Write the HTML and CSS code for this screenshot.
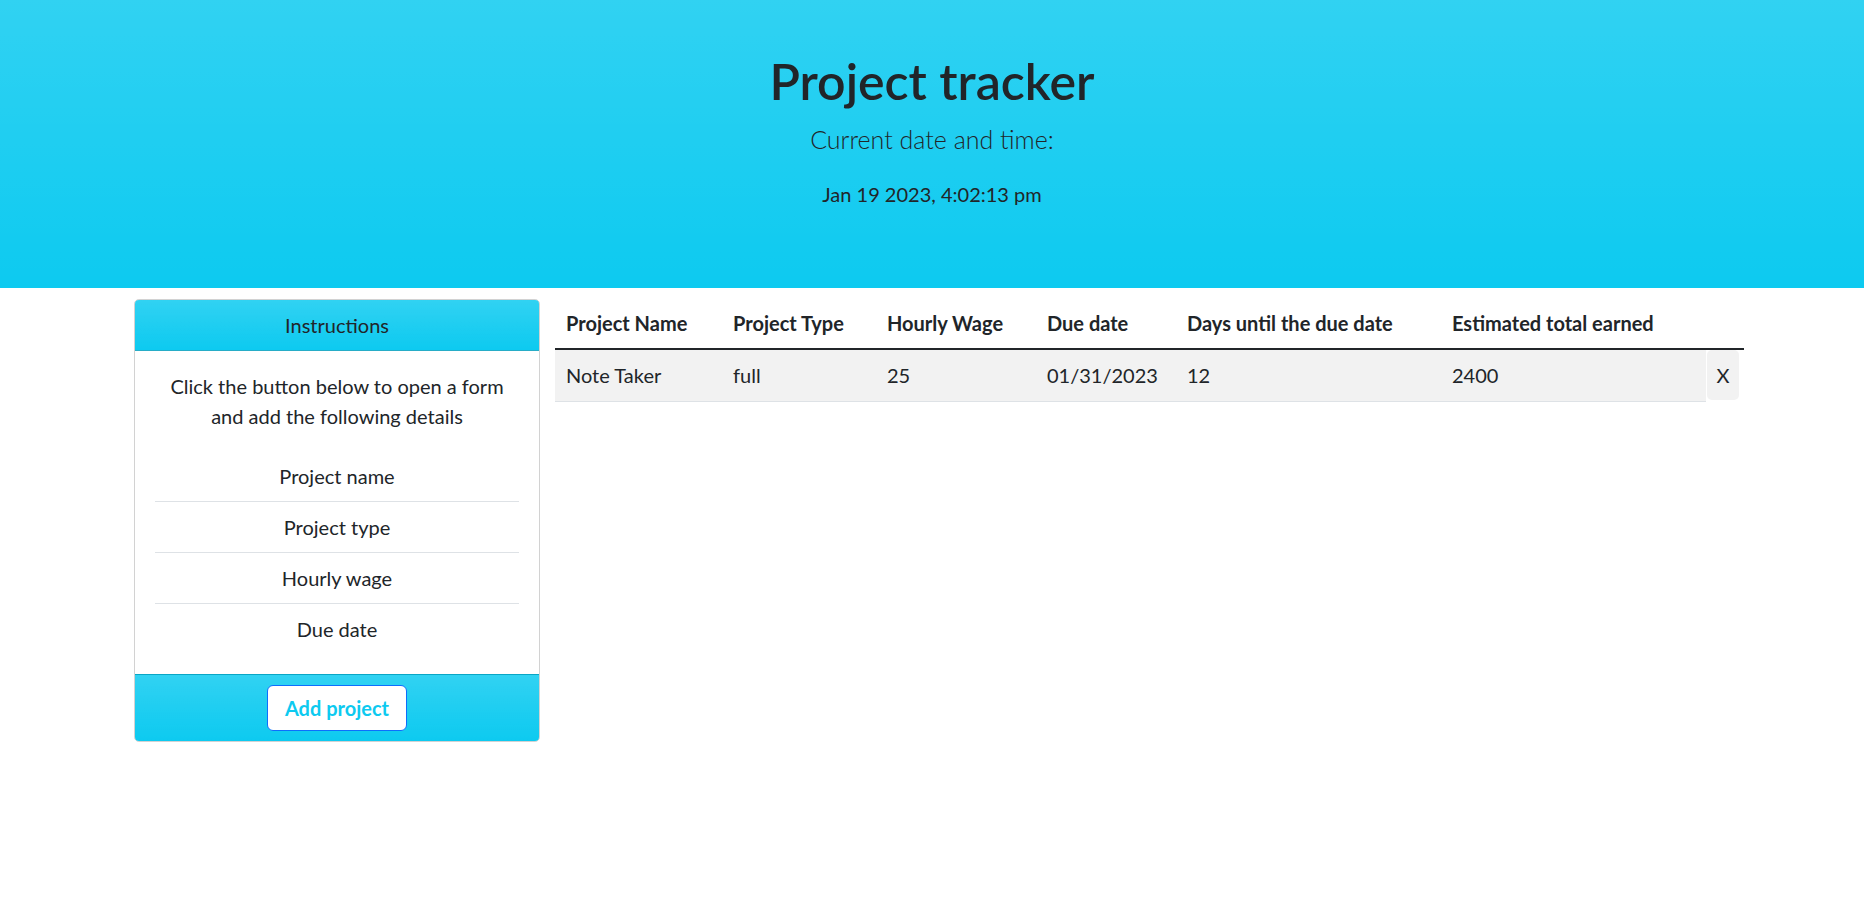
FILE: index.html
```html
<!DOCTYPE html>
<html lang="en">
<head>
<meta charset="utf-8">
<title>Project tracker</title>
<link rel="stylesheet" href="styles.css">
</head>
<body>
<header class="hero">
  <h1 class="title">Project tracker</h1>
  <p class="lead">Current date and time:</p>
  <p class="now">Jan 19 2023, 4:02:13 pm</p>
</header>
<main class="main">
  <aside class="card">
    <div class="card-header">Instructions</div>
    <div class="card-body">
      <p class="intro">Click the button below to open a form<br>and add the following details</p>
      <ul class="list">
        <li class="list-item">Project name</li>
        <li class="list-item">Project type</li>
        <li class="list-item">Hourly wage</li>
        <li class="list-item">Due date</li>
      </ul>
    </div>
    <div class="card-footer"><button class="add-btn" type="button">Add project</button></div>
  </aside>
  <section class="table-wrap">
    <table class="tbl">
      <thead>
        <tr>
          <th class="c1">Project Name</th>
          <th class="c2">Project Type</th>
          <th class="c3">Hourly Wage</th>
          <th class="c4">Due date</th>
          <th class="c5">Days until the due date</th>
          <th class="c6">Estimated total earned</th>
          <th class="c7"></th>
        </tr>
      </thead>
      <tbody>
        <tr class="striped">
          <td>Note Taker</td>
          <td>full</td>
          <td>25</td>
          <td>01/31/2023</td>
          <td>12</td>
          <td>2400</td>
          <td class="cx"><button class="del" type="button">X</button></td>
        </tr>
      </tbody>
    </table>
  </section>
</main>
</body>
</html>
```
FILE: styles.css
```css
* { box-sizing: border-box; }
html, body { margin: 0; padding: 0; }
body {
  font-family: "Segoe UI", Lato, "Open Sans", sans-serif;
  font-size: 20px;
  line-height: 1.5;
  color: #212529;
  background: #fff;
}
.hero {
  height: 288px;
  padding-top: 51px;
  text-align: center;
  background: linear-gradient(180deg, rgba(255,255,255,.15), rgba(255,255,255,0)), #0dcaf0;
}
.title {
  margin: 0 0 10px;
  font-size: 50px;
  line-height: 60px;
  font-weight: 600;
}
.lead {
  margin: 0 0 20px;
  font-size: 25px;
  line-height: 37.5px;
  font-weight: 300;
}
.now {
  margin: 0;
  font-size: 20px;
  line-height: 30px;
}
.main {
  display: flex;
  align-items: flex-start;
  gap: 15px;
  padding: 10px 0 0 134px;
}
.card {
  width: 406px;
  flex: none;
  margin-top: 1px;
  border: 1px solid rgba(0,0,0,.175);
  border-radius: 5px;
  overflow: hidden;
}
.card-header, .card-footer {
  background: linear-gradient(180deg, rgba(255,255,255,.15), rgba(255,255,255,0)), #0dcaf0;
  text-align: center;
}
.card-header {
  padding: 10px 20px;
  border-bottom: 1px solid rgba(0,0,0,.175);
}
.card-body {
  padding: 20px;
  text-align: center;
}
.intro { margin: 0 0 20px; }
.list {
  list-style: none;
  margin: 0;
  padding: 0;
}
.list-item {
  padding: 10px 0;
  border-bottom: 1px solid #dee2e6;
}
.list-item:last-child { border-bottom: 0; }
.card-footer {
  padding: 10px 20px;
  border-top: 1px solid rgba(0,0,0,.175);
}
.add-btn {
  height: 46px;
  width: 140px;
  padding: 0;
  font-family: inherit;
  font-size: 20px;
  font-weight: 700;
  color: #0dcaf0;
  background: #fff;
  border: 1px solid #0d6efd;
  border-radius: 6px;
}
.table-wrap { width: 1189px; flex: none; }
.tbl {
  width: 1189px;
  table-layout: fixed;
  border-collapse: collapse;
}
.tbl th, .tbl td {
  padding: 10px 10px 10px 11px;
  text-align: left;
  white-space: nowrap;
  line-height: 30px;
}
.tbl th {
  font-weight: 700;
  border-bottom: 2.5px solid #212529;
}
.tbl td {
  background: #f2f2f2;
  border-bottom: 1px solid #dee2e6;
}
.c1 { width: 167px; }
.c2 { width: 154px; }
.c3 { width: 160px; }
.c4 { width: 140px; }
.c5 { width: 265px; }
.c6 { width: 265px; }
.c7 { width: 38px; }
.tbl td.cx {
  background: #fff;
  border-bottom: 0;
  padding: 0 5px 1px 1px;
}
.del {
  display: block;
  width: 32px;
  height: 50px;
  padding: 0;
  font-family: inherit;
  font-size: 20px;
  color: #212529;
  background: #f2f2f2;
  border: 0;
  border-radius: 5px;
}
```
